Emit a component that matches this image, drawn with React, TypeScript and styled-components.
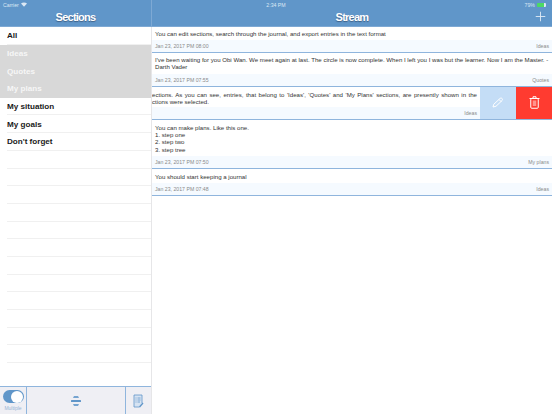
import React from 'react'
import styled, { createGlobalStyle } from 'styled-components'
import { Plus } from 'lucide-react'

const GlobalCss = createGlobalStyle`
  html, body {
    margin: 0;
    padding: 0;
    background: #fff;
    font-family: "Liberation Sans", Arial, sans-serif;
  }
`

const Page = styled.div`
  width: 552px;
  height: 414px;
  overflow: hidden;
  display: flex;
  flex-direction: column;
`

const NavBar = styled.div`
  height: 26px;
  flex-shrink: 0;
  background: #6096c9;
  display: grid;
  grid-template-columns: 152px 1fr;
  border-bottom: 1px solid #7ea9d4;
  position: relative;
`

const StatusBar = styled.div`
  position: absolute;
  top: 0;
  left: 0;
  right: 0;
  height: 9px;
  padding: 0 3px;
  display: flex;
  align-items: center;
  justify-content: space-between;
  font-size: 5.2px;
  color: #dce8f4;
`

const StatusSide = styled.div`
  width: 60px;
  display: flex;
  align-items: center;
  gap: 2px;
  justify-content: ${p => (p.$end ? 'flex-end' : 'flex-start')};
`

const Battery = styled.span`
  display: inline-block;
  width: 9px;
  height: 4px;
  margin-right: 3px;
  border-radius: 1px;
  background: linear-gradient(90deg, #4cd964 80%, #dce8f4 80%);
`

const NavPane = styled.div`
  display: flex;
  align-items: flex-end;
  justify-content: center;
  padding-bottom: 3px;
  position: relative;
  border-right: ${p => (p.$side ? '1px solid #7ea9d4' : 'none')};
`

const NavTitle = styled.div`
  font-size: 11px;
  line-height: 12px;
  font-weight: 700;
  letter-spacing: -0.75px;
  color: #fff;
  text-shadow: 0 0.5px 1px rgba(40, 60, 90, 0.6);
`

const AddButton = styled.div`
  position: absolute;
  right: 4px;
  bottom: 2px;
  height: 15px;
  color: #dbe7f3;
`

const Body = styled.div`
  flex: 1;
  display: grid;
  grid-template-columns: 152px 1fr;
  min-height: 0;
`

const Sidebar = styled.div`
  display: flex;
  flex-direction: column;
  border-right: 1px solid #e6e6e8;
  min-height: 0;
`

const SectionList = styled.div`
  flex: 1;
  overflow: hidden;
`

const SectionRow = styled.div`
  height: 17.7px;
  box-sizing: border-box;
  padding-left: 7px;
  display: flex;
  align-items: center;
  font-size: 8.1px;
  font-weight: 700;
  color: ${p => (p.$active ? '#f6f6f6' : '#1a1a1a')};
  background: ${p => (p.$active ? '#d8d8d8' : '#fff')};
  position: relative;
  &::after {
    content: '';
    position: absolute;
    left: ${p => (p.$active ? '0' : '7px')};
    right: 0;
    bottom: 0;
    height: 1px;
    background: ${p => (p.$active ? '#d8d8d8' : '#f0f0f0')};
  }
`

const Toolbar = styled.div`
  height: 28px;
  flex-shrink: 0;
  box-sizing: border-box;
  background: #efeff4;
  border-top: 1px solid #8fb5dd;
  display: grid;
  grid-template-columns: 27px 1fr 26px;
`

const ToggleCell = styled.div`
  border-right: 1px solid #8fb5dd;
  display: flex;
  flex-direction: column;
  align-items: center;
  padding-top: 3px;
  gap: 2px;
`

const Toggle = styled.div`
  width: 21px;
  height: 13px;
  border-radius: 6.5px;
  background: #6096c9;
  position: relative;
  &::after {
    content: '';
    position: absolute;
    right: 0.5px;
    top: 0.5px;
    width: 12px;
    height: 12px;
    border-radius: 50%;
    background: #fff;
  }
`

const ToggleLabel = styled.div`
  font-size: 5px;
  line-height: 7px;
  color: #98b5d6;
`

const ToolCell = styled.div`
  display: flex;
  align-items: center;
  justify-content: center;
  color: #6096c9;
  border-left: ${p => (p.$divided ? '1px solid #8fb5dd' : 'none')};
`

const Stream = styled.div`
  display: flex;
  flex-direction: column;
  min-width: 0;
  overflow: hidden;
`

const Entry = styled.div`
  border-bottom: 1.5px solid #8fb5dd;
  flex-shrink: 0;
`

const SwipeEntry = styled(Entry)`
  display: flex;
`

const EntryMain = styled.div`
  flex: 1;
  min-width: 0;
  overflow: hidden;
`

const EntryText = styled.div`
  font-size: 6.1px;
  line-height: 7.2px;
  color: #333;
  padding: ${p => (p.$loose ? '4px' : '3px')} 3px 3px 3px;
  white-space: pre-line;
`

const ClippedText = styled.div`
  font-size: 6.1px;
  line-height: 7.2px;
  color: #333;
  margin-left: -3px;
  padding: 4px 3px 2px 0;
`

const JustifiedLine = styled.div`
  text-align: justify;
  text-align-last: justify;
  white-space: nowrap;
`

const PlainLine = styled.div`
  white-space: nowrap;
  margin-left: -3.4px;
`

const EntryFooter = styled.div`
  background: #f5faff;
  height: 12px;
  display: flex;
  align-items: center;
  justify-content: space-between;
  padding: 0 3px;
  font-size: 5.2px;
  color: #8a8a8a;
`

const SwipeAction = styled.div`
  width: 36px;
  flex-shrink: 0;
  display: flex;
  align-items: center;
  justify-content: center;
  color: #fff;
  background: ${p => p.$bg};
`

const sections = [
  { name: 'All' },
  { name: 'Ideas', active: true },
  { name: 'Quotes', active: true },
  { name: 'My plans', active: true },
  { name: 'My situation' },
  { name: 'My goals' },
  { name: "Don't forget" },
  ...Array.from({ length: 12 }, () => ({ name: '' })),
]

const entries = [
  {
    text: 'You can edit sections, search through the journal, and export entries in the text format',
    date: 'Jan 23, 2017 PM 08:00',
    tag: 'Ideas',
  },
  {
    text: "I've been waiting for you Obi Wan. We meet again at last. The circle is now complete. When I left you I was but the learner. Now I am the Master. - Darth Vader",
    date: 'Jan 23, 2017 PM 07:55',
    tag: 'Quotes',
  },
]

const lastEntries = [
  {
    text: 'You can make plans. Like this one.\n1. step one\n2. step two\n3. step tree',
    date: 'Jan 23, 2017 PM 07:50',
    tag: 'My plans',
  },
  {
    text: 'You should start keeping a journal',
    date: 'Jan 23, 2017 PM 07:48',
    tag: 'Ideas',
  },
]

function Wifi() {
  return (
    <svg width="6" height="5" viewBox="0 0 12 10" fill="currentColor">
      <path d="M6 9.5 0 3.2C3.5 0 8.5 0 12 3.2Z" />
    </svg>
  )
}

function PencilIcon() {
  return (
    <svg width="12" height="11" viewBox="0 0 24 22" fill="none" stroke="currentColor" strokeWidth="2" strokeLinejoin="round">
      <path d="M2 20 3.5 14.5 16 3c1.2-1.1 3-1.1 4.2 0s1.100 2.800 0 4L8 18.500Z" />
      <path d="M14 5l4.500 4.500" />
    </svg>
  )
}

function TrashIcon() {
  return (
    <svg width="11" height="13" viewBox="0 0 22 26" fill="none" stroke="currentColor" strokeWidth="2">
      <path d="M1 5h20M8 5V1.500h6V5" />
      <rect x="3.500" y="5" width="15" height="19.500" rx="2" />
      <rect x="7.500" y="9" width="7" height="11" fill="currentColor" fillOpacity="0.45" stroke="none" />
    </svg>
  )
}

function CollapseIcon() {
  return (
    <svg width="10" height="10" viewBox="0 0 20 20" fill="currentColor">
      <path d="M6 0h8l2 4H4Z" fillOpacity="0.85" />
      <rect x="0" y="8" width="20" height="4" rx="1" />
      <path d="M4 16h12l-2 4H6Z" fillOpacity="0.85" />
    </svg>
  )
}

function NotesIcon() {
  return (
    <svg width="11" height="14" viewBox="0 0 22 28" fill="none" stroke="currentColor" strokeWidth="1.6">
      <path d="M13 26H2V2h16v16" fill="#d6e3f2" />
      <path d="M5 8h2M9 8h6M5 12h2M9 12h6M5 16h2M9 16h5" />
      <path d="M13 26l7-8" strokeWidth="2.6" />
    </svg>
  )
}

export default function App() {
  return (
    <Page>
      <GlobalCss />
      <NavBar>
        <StatusBar>
          <StatusSide>
            Carrier <Wifi />
          </StatusSide>
          <span>2:34 PM</span>
          <StatusSide $end>
            79% <Battery />
          </StatusSide>
        </StatusBar>
        <NavPane $side>
          <NavTitle>Sections</NavTitle>
        </NavPane>
        <NavPane>
          <NavTitle>Stream</NavTitle>
          <AddButton>
            <Plus size={15} strokeWidth={1.5} />
          </AddButton>
        </NavPane>
      </NavBar>
      <Body>
        <Sidebar>
          <SectionList>
            {sections.map((s, i) => (
              <SectionRow key={i} $active={s.active}>
                {s.name}
              </SectionRow>
            ))}
          </SectionList>
          <Toolbar>
            <ToggleCell>
              <Toggle />
              <ToggleLabel>Multiple</ToggleLabel>
            </ToggleCell>
            <ToolCell>
              <CollapseIcon />
            </ToolCell>
            <ToolCell $divided>
              <NotesIcon />
            </ToolCell>
          </Toolbar>
        </Sidebar>
        <Stream>
          {entries.map(e => (
            <Entry key={e.date}>
              <EntryText>{e.text}</EntryText>
              <EntryFooter>
                <span>{e.date}</span>
                <span>{e.tag}</span>
              </EntryFooter>
            </Entry>
          ))}
          <SwipeEntry>
            <EntryMain>
              <ClippedText>
                <JustifiedLine>
                  sections. As you can see, entries, that belong to 'Ideas', 'Quotes' and 'My Plans' sections, are presently shown in the
                </JustifiedLine>
                <PlainLine>sections were selected.</PlainLine>
              </ClippedText>
              <EntryFooter>
                <span />
                <span>Ideas</span>
              </EntryFooter>
            </EntryMain>
            <SwipeAction $bg="#c4ddf6">
              <PencilIcon />
            </SwipeAction>
            <SwipeAction $bg="#ff3b30">
              <TrashIcon />
            </SwipeAction>
          </SwipeEntry>
          {lastEntries.map(e => (
            <Entry key={e.date}>
              <EntryText $loose>{e.text}</EntryText>
              <EntryFooter>
                <span>{e.date}</span>
                <span>{e.tag}</span>
              </EntryFooter>
            </Entry>
          ))}
        </Stream>
      </Body>
    </Page>
  )
}
